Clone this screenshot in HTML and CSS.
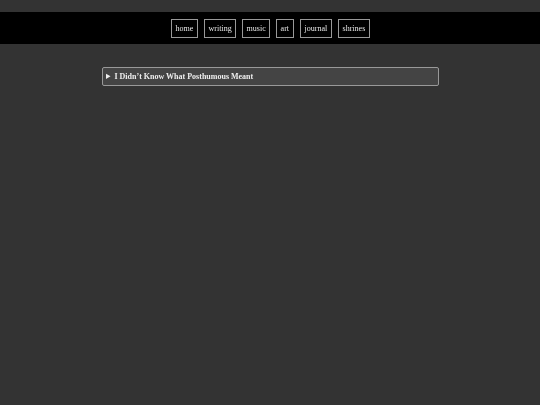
FILE: index.html
```html
<!DOCTYPE html>
<html>
<head>
<meta charset="utf-8">
<link rel="stylesheet" href="styles.css">
</head>
<body>
<div class="topgap"></div>
<nav class="nav">
  <a class="nav-link" href="#">home</a>
  <a class="nav-link" href="#">writing</a>
  <a class="nav-link" href="#">music</a>
  <a class="nav-link" href="#">art</a>
  <a class="nav-link" href="#">journal</a>
  <a class="nav-link" href="#">shrines</a>
</nav>
<main class="main">
  <details class="entry">
    <summary class="entry-title">I Didn’t Know What Posthumous Meant</summary>
  </details>
</main>
</body>
</html>
```

FILE: styles.css
```css
html, body {
  margin: 0;
  padding: 0;
  background: #333333;
  font-family: "Liberation Serif", "Times New Roman", serif;
  color: #eeeeee;
}
.topgap {
  height: 12px;
}
.nav {
  background: #000000;
  display: flex;
  justify-content: center;
  gap: 6px;
  padding: 7px 0 6px;
}
.nav-link {
  display: block;
  color: #e6e6e6;
  text-decoration: none;
  font-size: 8px;
  line-height: 11px;
  padding: 3px 3.6px;
  border: 1px solid #999999;
  will-change: transform;
}
.main {
  width: 337px;
  margin: 23px auto 0;
}
.entry {
  background: #444444;
  border: 1px solid #999999;
  border-radius: 2px;
}
.entry-title {
  font-size: 8px;
  font-weight: bold;
  line-height: 17px;
  padding: 0 3px;
  cursor: pointer;
  color: #eeeeee;
  will-change: transform;
}
```
